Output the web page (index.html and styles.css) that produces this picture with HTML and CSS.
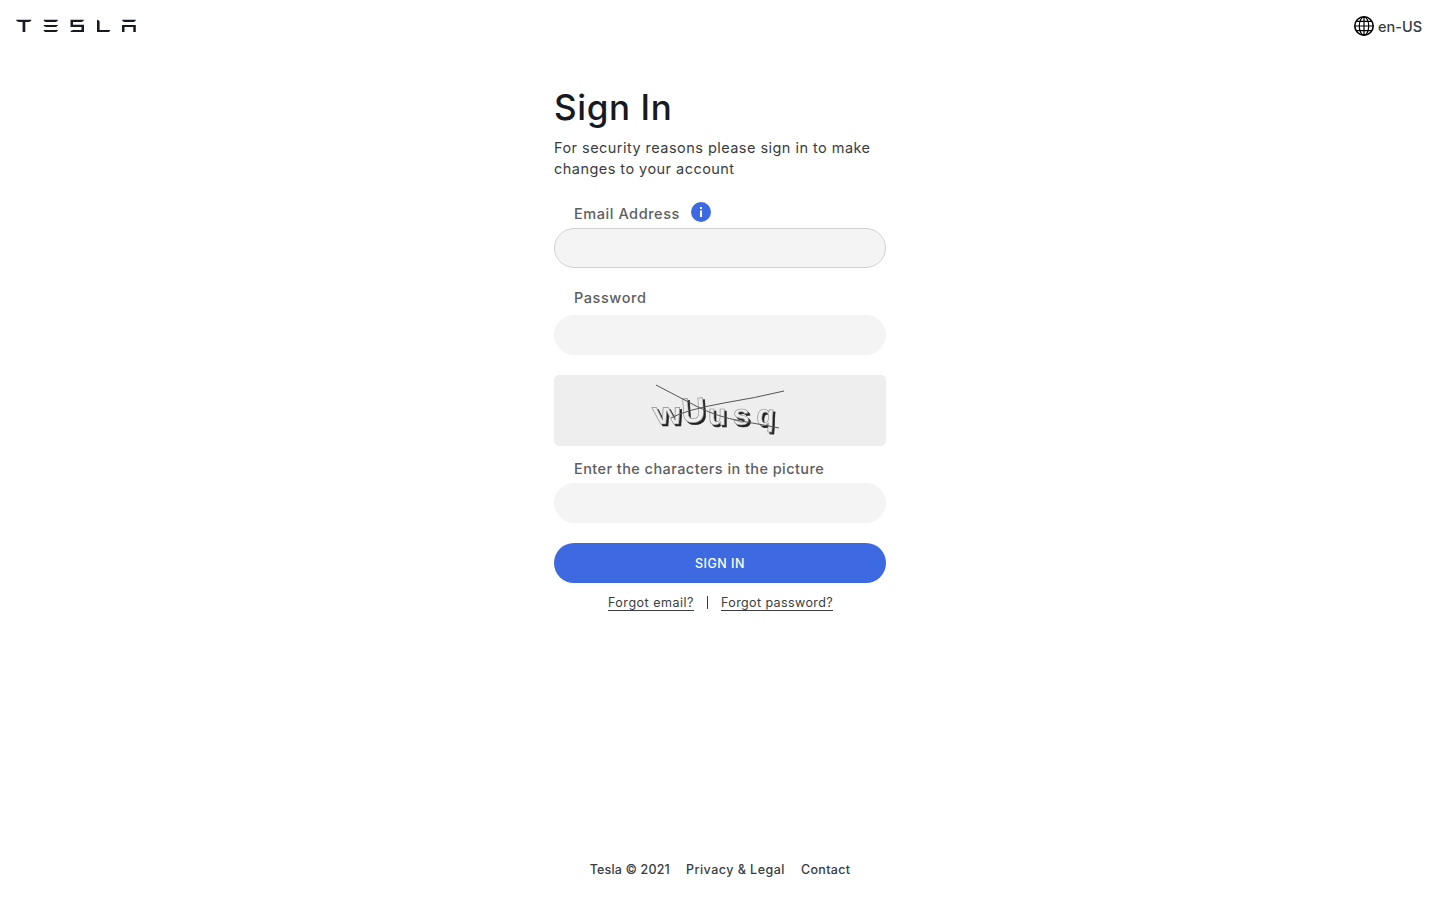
FILE: index.html
```
<!DOCTYPE html>
<html lang="en-US">
<head>
<meta charset="utf-8">
<title>Sign In</title>
<link rel="stylesheet" href="styles.css">
</head>
<body>
<header class="header">
  <a class="logo" aria-label="Home">
    <svg width="120" height="14" viewBox="16 19 120 14" fill="#171a20">
      <path d="M16 19.800h15.500c-.5 1.400-1.400 2.200-3 2.200h-3.200V32h-2.700V22h-3.200c-1.700 0-2.800-.8-3.400-2.200z"/>
      <path d="M43.500 19.800h14.500c-.5 1.400-1.500 2.200-2.800 2.200h-9c-1.400 0-2.200-.8-2.700-2.200zM43.500 24.900h14.500c-.5 1.300-1.500 2-2.800 2h-9c-1.400 0-2.200-.7-2.700-2zM43.500 29.900h14.500c-.5 1.400-1.500 2.200-2.800 2.200h-9c-1.400 0-2.200-.8-2.700-2.200z"/>
      <path d="M70.500 19.800h13.500c-.6 1.500-1.500 2.200-3 2.200h-8v2.800H84v7.300H70.300c.6-1.500 1.500-2.200 3-2.200h8.200v-3h-11z"/>
      <path d="M97 19.800c1.500.2 2.500 1 2.600 2v8.100h10.800c-.6 1.500-1.600 2.200-3 2.200H97z"/>
      <path d="M122 19.800h14c-.5 1.400-1.400 2.200-2.800 2.200h-8.400c-1.400 0-2.300-.8-2.800-2.200zM122 24.900h13.800V32h-2.500v-4.900h-8.800V32H122z"/>
    </svg>
  </a>
  <a class="locale">
    <svg width="20" height="20" viewBox="0 0 20 20" fill="none" stroke="#000" stroke-width="1.200">
      <circle cx="10" cy="10" r="9.200" stroke-width="1.600"/>
      <ellipse cx="10" cy="10" rx="4.700" ry="9.200"/>
      <path d="M10 1v18M1 10h18M2.500 5.300h15M2.500 14.700h15"/>
    </svg>
    <span class="locale-text">en-US</span>
  </a>
</header>
<main class="main">
  <h1 class="title">Sign In</h1>
  <p class="intro">For security reasons please sign in to make<br>changes to your account</p>
  <form class="form">
    <label class="label label-email" for="email">Email Address
      <svg class="info" width="20" height="20" viewBox="0 0 20 20"><circle cx="10" cy="10" r="10" fill="#3e6ae1"/><path d="M9 5h2v2H9zM9 8.500h2V15H9z" fill="#fff"/></svg>
    </label>
    <input class="input input-active" id="email" type="text">
    <label class="label label-password" for="password">Password</label>
    <input class="input" id="password" type="password">
    <div class="captcha">
      <svg width="150" height="60" viewBox="645 380 150 60">
        <g class="captcha-text">
          <text font-size="31" transform="translate(656 424) skewX(14) scale(1.150 1)">w</text>
          <text font-size="35" transform="translate(682 423) rotate(-3) scale(.950 1)">U</text>
          <text font-size="30" transform="translate(708 425)">u</text>
          <text font-size="30" transform="translate(733 425)">s</text>
          <text font-size="30" transform="translate(756 425) rotate(3)">q</text>
        </g>
        <path d="M656 385L698 407Q718 417 741 421T779 428M671 418Q685 410 724 403Q755 398 784 391" fill="none" stroke="#555" stroke-width="1"/>
      </svg>
    </div>
    <label class="label label-captcha" for="captcha">Enter the characters in the picture</label>
    <input class="input" id="captcha" type="text">
    <button class="submit" type="button">SIGN IN</button>
  </form>
  <div class="links"><a class="link link-email">Forgot email?</a><span class="divider"></span><a class="link link-password">Forgot password?</a></div>
</main>
<footer class="footer"><span class="copyright">Tesla © 2021</span><a class="privacy">Privacy &amp; Legal</a><a class="contact">Contact</a></footer>
</body>
</html>
```
FILE: styles.css
```
* { box-sizing: border-box; }
body {
  margin: 0;
  min-height: 900px;
  display: flex;
  flex-direction: column;
  background: #fff;
  color: #393c41;
  font-family: Inter, "Liberation Sans", sans-serif;
  font-size: 14.5px;
}
.header {
  display: flex;
  justify-content: space-between;
  align-items: flex-start;
  height: 52px;
  padding: 16px 18px 0 16px;
}
.logo { display: block; height: 14px; margin-top: 3px; }
.logo svg, .locale svg { display: block; }
.locale { display: flex; gap: 4px; font-weight: 500; }
.locale-text { line-height: 22px; }
.main { width: 332px; margin: 0 auto; }
.title {
  margin: 33px 0 0;
  font-size: 35px;
  font-weight: 540;
  line-height: 44px;
  letter-spacing: .6px;
  color: #171a20;
}
.intro { margin: 8px 0 0; line-height: 21px; letter-spacing: .46px; white-space: nowrap; }
.form { display: flex; flex-direction: column; }
.label {
  display: flex;
  align-items: center;
  gap: 11px;
  padding-left: 20px;
  line-height: 20px;
  letter-spacing: .43px;
  font-weight: 500;
  color: #5c5e62;
}
.label-email { height: 21px; margin: 24px 0 4px; letter-spacing: .56px; }
.info { margin-top: -3px; }
.label-password { margin: 20px 0 7px; letter-spacing: .56px; }
.label-captcha { margin: 13px 0 4px; }
.input {
  width: 100%;
  height: 40px;
  border: 1px solid #f4f4f4;
  border-radius: 20px;
  background: #f4f4f4;
  outline: none;
}
.input-active { border-color: #d0d1d2; }
.captcha {
  height: 71px;
  margin-top: 20px;
  padding: 5px 0 0 91px;
  border-radius: 5px;
  background: #eee;
}
.captcha svg { display: block; }
.captcha-text {
  font-family: "Liberation Sans", sans-serif;
  font-weight: 700;
  fill: #eee;
  stroke: #888;
  stroke-width: .6px;
  filter: drop-shadow(2px 2px 0 #222);
}
.submit {
  height: 40px;
  margin-top: 20px;
  border: 0;
  border-radius: 20px;
  background: #3e6ae1;
  color: #fff;
  font: 500 12.5px/40px Inter, sans-serif;
  letter-spacing: .5px;
}
.links { display: flex; justify-content: center; margin-top: 12px; padding-left: 1px; font-size: 12.5px; line-height: 15px; }
.link { border-bottom: 1px solid #393c41; }
.link-email { letter-spacing: .51px; }
.link-password { letter-spacing: .4px; }
.divider { width: 1px; height: 13px; margin: 1px 13px 0; background: #393c41; }
.footer {
  display: flex;
  justify-content: center;
  gap: 16px;
  margin-top: auto;
  padding-bottom: 20px;
  font-size: 12.5px;
  line-height: 20px;
  font-weight: 500;
}
.copyright { letter-spacing: .17px; }
.privacy { letter-spacing: .48px; }
.contact { letter-spacing: .33px; }
```
